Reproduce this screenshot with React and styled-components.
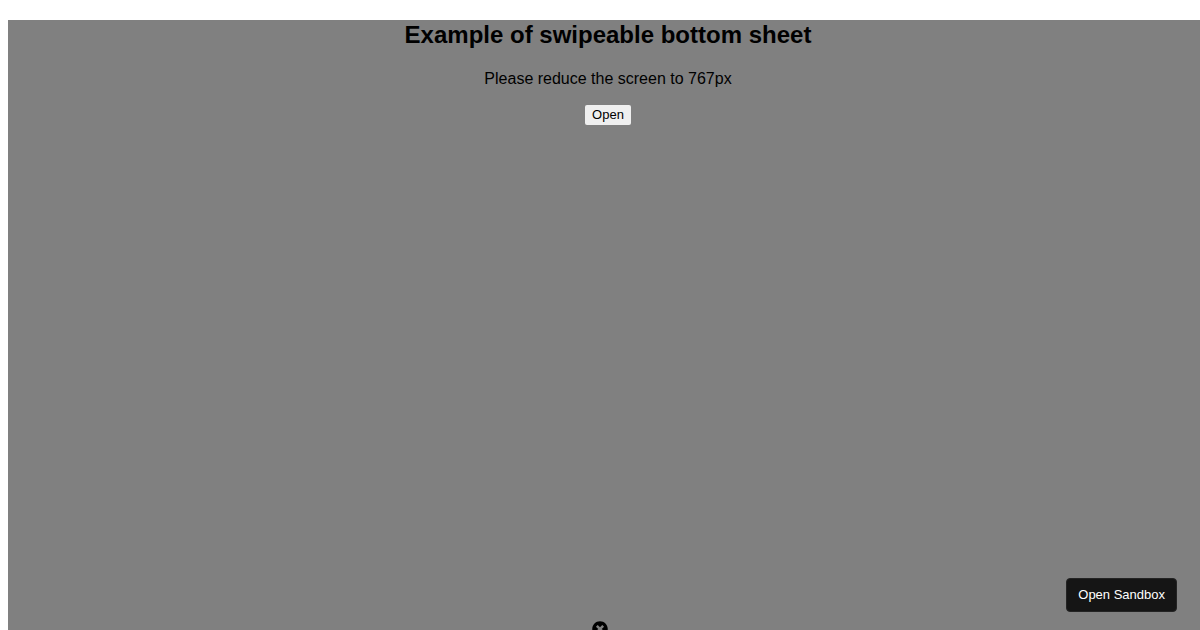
import React, { useState } from 'react';
import styled, { createGlobalStyle } from 'styled-components';
import { FaTimesCircle } from 'react-icons/fa';

const GlobalStyle = createGlobalStyle`
  body {
    margin: 0 0 0 8px;
    background: #fff;
    color: #000;
    font-family: 'Liberation Sans', Arial, sans-serif;
    overflow: hidden;
  }
`;

// ── Styled Components ────────────────────────────────────────────────────────
const Page = styled.main`
  width: 100vw;
  min-height: 100vh;
  margin-top: 20px;
  background: #808080;
  text-align: center;
`;

const Title = styled.h1`
  margin: 0 0 20px;
  font-size: 24px;
  line-height: 30px;
`;

const Text = styled.p`
  margin: 0 0 17px;
  font-size: 16px;
  line-height: 18px;
`;

const OpenButton = styled.button`
  padding: 2px 7px 3px;
  border: 0;
  border-radius: 2px;
  background: #efefef;
  color: #000;
  font-family: inherit;
  font-size: 13px;
  line-height: 15px;
  cursor: pointer;
`;

const Sheet = styled.section`
  position: fixed;
  left: 0;
  right: 0;
  bottom: 0;
  height: ${(p) => (p.$open ? '240px' : '9px')};
  overflow: hidden;
  display: flex;
  align-items: flex-start;
  justify-content: center;
  transition: height 0.3s;
`;

const CloseButton = styled.button`
  display: flex;
  padding: 0;
  border: 0;
  background: none;
  color: #000;
  font-size: 16px;
  cursor: pointer;
`;

const SandboxLink = styled.a`
  position: fixed;
  right: 23px;
  bottom: 18px;
  padding: 8px 11px;
  border: 1px solid #242424;
  border-radius: 4px;
  background: #151515;
  color: #fff;
  font-size: 13px;
  line-height: 16px;
  text-decoration: none;
`;

// ── Component ────────────────────────────────────────────────────────────────
export default function App() {
  const [open, setOpen] = useState(false);

  return (
    <>
      <GlobalStyle />
      <Page>
        <Title>Example of swipeable bottom sheet</Title>
        <Text>Please reduce the screen to 767px</Text>
        <OpenButton type="button" onClick={() => setOpen(true)}>Open</OpenButton>
      </Page>
      <Sheet $open={open}>
        <CloseButton type="button" aria-label="Close" onClick={() => setOpen(false)}>
          <FaTimesCircle />
        </CloseButton>
      </Sheet>
      <SandboxLink href="#sandbox">Open Sandbox</SandboxLink>
    </>
  );
}
